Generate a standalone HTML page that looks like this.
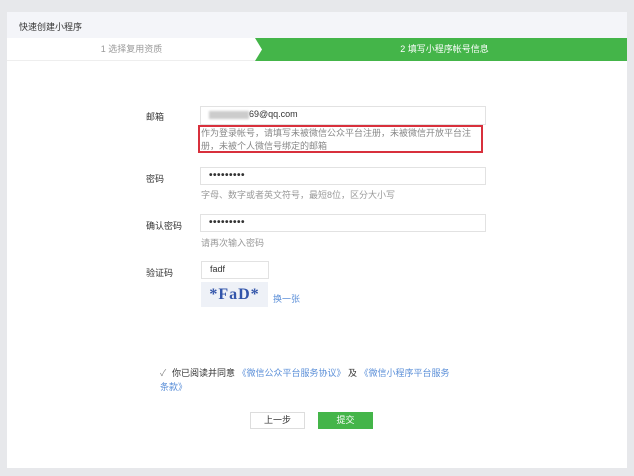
<!DOCTYPE html>
<html><head><meta charset="utf-8"><style>
*{margin:0;padding:0;box-sizing:border-box}
body{width:634px;height:476px;background:#e7e8eb;font-family:"Liberation Sans","Noto Sans CJK SC",sans-serif;font-size:9px;color:#333;position:relative;overflow:hidden}
.a{position:absolute}
.card{left:7px;top:12px;width:620px;height:456px;background:#fff}
.hdr{left:7px;top:12px;width:620px;height:26px;background:#f4f5f9;padding:8px 0 0 12px;font-size:9px;color:#333}
.inp{border:1px solid #e2e2e2;background:#fff;height:18px;padding:2px 8px;font-size:9px}
.lbl{font-size:9px;color:#333}
.hint{color:#999;font-size:9px}
.link{color:#5b8fd8}
.pw{font-size:10px;font-weight:bold;letter-spacing:0.5px;line-height:12px}
</style></head><body>
<div class="a card"></div>
<div class="a hdr">快速创建小程序</div>
<div class="a" style="left:7px;top:38px;width:620px;height:23px;border-bottom:1px solid #eee"></div>
<div class="a" style="left:7px;top:38px;width:249px;height:23px;line-height:23px;text-align:center;color:#999;font-size:9px">1 选择复用资质</div>
<svg class="a" style="left:255px;top:38px" width="372" height="23"><polygon points="0,0 372,0 372,23 0,23 7,11.5" fill="#44b549"/></svg>
<div class="a" style="left:262px;top:38px;width:365px;height:23px;line-height:23px;text-align:center;color:#fff;font-size:9px">2 填写小程序帐号信息</div>

<div class="a lbl" style="left:146px;top:110px">邮箱</div>
<div class="a inp" style="left:200px;top:106px;width:286px;height:19px"><span style="display:inline-block;width:40px;height:8px;background:#ccc;vertical-align:middle;filter:blur(1px)"></span><b style="font-weight:normal">69@qq.com</b></div>
<div class="a" style="left:198px;top:125px;width:285px;height:28px;border:2px solid #d8303c"></div>
<div class="a hint" style="left:201px;top:127px;width:282px;line-height:13px;color:#888">作为登录帐号，请填写未被微信公众平台注册，未被微信开放平台注册，未被个人微信号绑定的邮箱</div>

<div class="a lbl" style="left:146px;top:172px">密码</div>
<div class="a inp pw" style="left:200px;top:167px;width:286px;height:18px">•••••••••</div>
<div class="a hint" style="left:201px;top:188px">字母、数字或者英文符号，最短8位，区分大小写</div>

<div class="a lbl" style="left:146px;top:219px">确认密码</div>
<div class="a inp pw" style="left:200px;top:214px;width:286px;height:18px">•••••••••</div>
<div class="a hint" style="left:201px;top:236px">请再次输入密码</div>

<div class="a lbl" style="left:146px;top:266px">验证码</div>
<div class="a inp" style="left:201px;top:261px;width:68px;height:18px">fadf</div>
<div class="a" style="left:201px;top:282px;width:67px;height:25px;background:#eef1f7;color:#3355aa;font:bold 16px 'Liberation Serif',serif;text-align:center;line-height:25px;letter-spacing:1px">*<span>FaD</span>*</div>
<div class="a link" style="left:273px;top:292px">换一张</div>

<div class="a" style="left:160px;top:366px;color:#888">✓</div>
<div class="a" style="left:172px;top:366px;width:290px;line-height:14px">你已阅读并同意 <span class="link">《微信公众平台服务协议》</span> 及 <span class="link">《微信小程序平台服务</span></div>
<div class="a link" style="left:160px;top:380px;line-height:14px">条款》</div>

<div class="a" style="left:250px;top:412px;width:55px;height:17px;border:1px solid #ddd;text-align:center;line-height:15px">上一步</div>
<div class="a" style="left:318px;top:412px;width:55px;height:17px;background:#44b549;color:#fff;text-align:center;line-height:17px">提交</div>
</body></html>
